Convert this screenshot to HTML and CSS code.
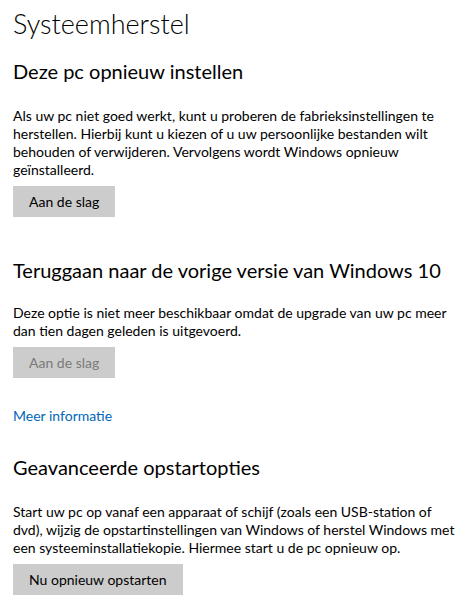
FILE: index.html
```html
<!DOCTYPE html>
<html lang="nl">
<head>
  <meta charset="UTF-8" />
  <title>Systeemherstel</title>
  <link rel="stylesheet" href="styles.css">
</head>
<body>
  <div class="page">
    <h1>Systeemherstel</h1>

    <section class="block">
      <h2>Deze pc opnieuw instellen</h2>
      <p>Als uw pc niet goed werkt, kunt u proberen de fabrieksinstellingen te<br>herstellen. Hierbij kunt u kiezen of u uw persoonlijke bestanden wilt<br>behouden of verwijderen. Vervolgens wordt Windows opnieuw<br>geïnstalleerd.</p>
      <button type="button">Aan de slag</button>
    </section>

    <section class="block">
      <h2 class="tight">Teruggaan naar de vorige versie van Windows 10</h2>
      <p>Deze optie is niet meer beschikbaar omdat de upgrade van uw pc meer<br>dan tien dagen geleden is uitgevoerd.</p>
      <button type="button" disabled>Aan de slag</button>
      <a class="more" href="#">Meer informatie</a>
    </section>

    <section class="block">
      <h2>Geavanceerde opstartopties</h2>
      <p>Start uw pc op vanaf een apparaat of schijf (zoals een USB-station of<br>dvd), wijzig de opstartinstellingen van Windows of herstel Windows met<br>een systeeminstallatiekopie. Hiermee start u de pc opnieuw op.</p>
      <button type="button">Nu opnieuw opstarten</button>
    </section>
  </div>
</body>
</html>
```

FILE: styles.css
```css
body {
  margin: 0;
  background: #fff;
  color: #000;
  font-family: 'Lato', sans-serif;
}
.page {
  padding: 4px 13px 0 13px;
  width: 450px;
}
h1 {
  font-size: 27px;
  font-weight: 300;
  margin: 0 0 13px 0;
  line-height: 40px;
}
h2 {
  font-size: 20px;
  font-weight: 400;
  margin: 0 0 22px 0;
  line-height: 28px;
}
h2.tight {
  margin-bottom: 20px;
}
.block {
  margin-bottom: 39px;
}
.block:nth-child(3) {
  margin-bottom: 28px;
}
p {
  font-size: 14px;
  line-height: 18px;
  margin: 0 0 7px 0;
  white-space: nowrap;
}
button {
  display: block;
  font-family: inherit;
  font-size: 14px;
  background: #ccc;
  color: #000;
  border: none;
  padding: 0 16px;
  height: 31px;
  cursor: pointer;
}
button:disabled {
  color: #7a7a7a;
}
.more {
  display: inline-block;
  margin-top: 28px;
  font-size: 14px;
  line-height: 19px;
  color: #0067b8;
  text-decoration: none;
}
```
